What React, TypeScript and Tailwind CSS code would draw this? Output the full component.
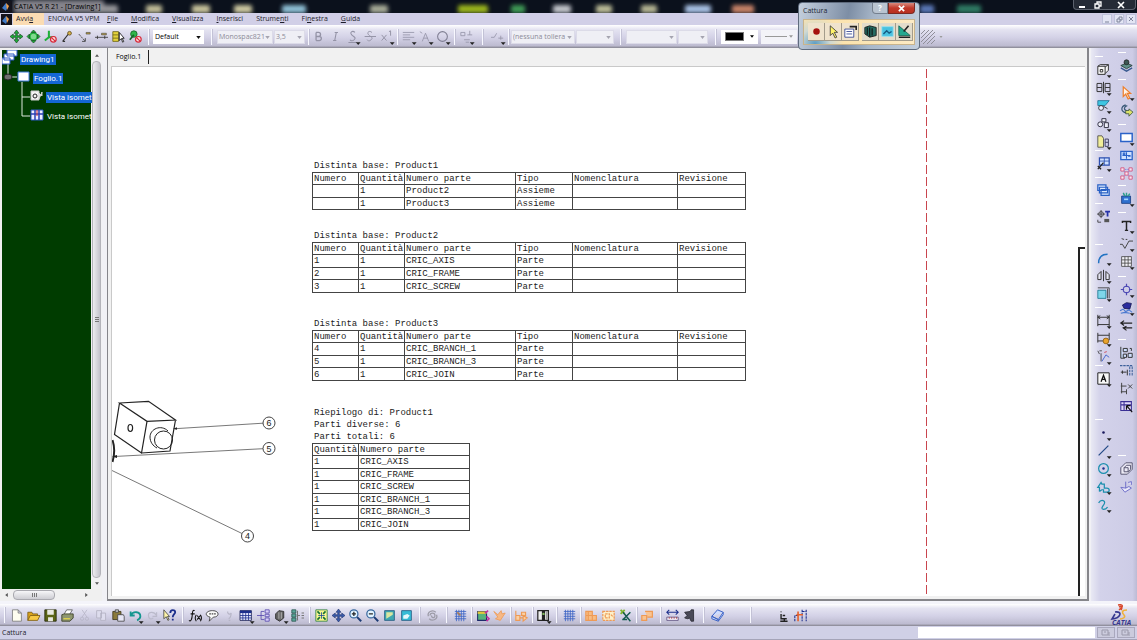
import type { ReactNode } from "react";
import clsx from "clsx";

type ToolItem = {
  label: string;
  icon: ReactNode;
  drop?: boolean;
};

type ToolGroup = {
  gap: string;
  tools: ToolItem[];
};

const FONT = "font-['Open_Sans','Noto_Sans',sans-serif]";
const BAR =
  "bg-[linear-gradient(to_bottom,#ffffff_0%,#e4e3f1_20%,#d3d1e6_55%,#bdbbd0_90%,#85848f_100%)]";

/* ---------- toolbar data ---------- */

const green = "#1fae3a";
const navy = "#1c2f8c";
const blue = "#3b62c4";
const orange = "#ee9a55";
const teal = "#1b8fae";
const dim = "#9493a6";

const moveArrows = (
  <path d="M8 0l3 4H9v3h3V5l4 3-4 3V9H9v3h2l-3 4-3-4h2V9H4v2L0 8l4-3v2h3V4H5z" fill={green} stroke="#17421f" strokeWidth=".8" />
);

const ban = (
  <g stroke="#d8293a" strokeWidth="1.5">
    <circle cx="11.5" cy="11.5" r="3.5" fill="#fbd9d9" />
    <path d="M9 9l5 5" />
  </g>
);

const gridIcon = (
  <path d="M1 3h14M1 6h14M1 9h14M1 12h14M3 1v14M6 1v14M9 1v14M12 1v14" stroke={blue} />
);

const viewTools: ToolItem[] = [
  { label: "Sposta", icon: moveArrows },
  {
    label: "Ruota",
    icon: (
      <>
        <circle cx="8" cy="8" r="4.5" fill="#7fd98d" stroke={green} strokeWidth="2" />
        <path d="M8 0l3 3H5zM8 16l3-3H5zM0 8l3-3v6zM16 8l-3-3v6z" fill={green} stroke="#17421f" strokeWidth=".8" />
      </>
    ),
  },
  {
    label: "Blocca assi",
    icon: (
      <>
        <path d="M6 1v8M6 9h7M6 9l-5 4" stroke={green} strokeWidth="2.5" />
        {ban}
      </>
    ),
  },
  {
    label: "Bacchetta",
    icon: (
      <>
        <path d="M2 14l7-9M2 14h3" stroke="#333" strokeWidth="1.3" />
        <circle cx="10.5" cy="4" r="2.3" fill="#d6b14c" stroke="#5e4a1a" />
      </>
    ),
  },
  {
    label: "Linea guida",
    icon: (
      <>
        <path d="M1 5l8 9" stroke="#333" strokeDasharray="3 1" />
        <path d="M10 3h5v2h-5z" fill="#b89c3f" stroke="#444" strokeWidth=".7" />
        <path d="M9 14v-4M9 14H5" stroke="#333" />
      </>
    ),
  },
  {
    label: "Allinea",
    icon: (
      <>
        <path d="M0 9h16M3 7v4M12 7v4" stroke="#333" />
        <path d="M8 4h6v2H8z" fill="#b89c3f" stroke="#444" strokeWidth=".7" />
      </>
    ),
  },
  {
    label: "Catalogo",
    icon: (
      <>
        <path d="M1 2h7v12H1zM1 6h7M1 10h7" fill="#e4d23c" stroke="#6b6216" />
        <path d="M9 3v10l2.500-2.500L13 15l1.500-.8-2-4H15z" fill="#fff" stroke="#111" />
      </>
    ),
  },
  {
    label: "Disattiva vincoli",
    icon: (
      <>
        <circle cx="6" cy="5" r="4" fill="#2fb84b" stroke="#18622a" />
        <path d="M1 12l5-6" stroke="#18622a" strokeWidth="2" />
        {ban}
      </>
    ),
  },
];

const textTools: ToolItem[] = [
  { label: "Grassetto", icon: <path d="M5 3v10M5 3h3a2.500 2.500 0 010 5H5h4a2.500 2.500 0 010 5H5" stroke={dim} strokeWidth="1.6" /> },
  { label: "Corsivo", icon: <path d="M7 3h4M5 13h4M9 3L7 13" stroke={dim} strokeWidth="1.3" /> },
  { label: "Sottolineato", drop: true, icon: <path d="M11 3C8 0 4 3 7 6s6 3 3 6-5 0-5 0M3 15.500h10" stroke={dim} strokeWidth="1.3" /> },
  { label: "Barrato", icon: <path d="M11 3C8 0 4 3 7 6s6 3 3 6-5 0-5 0M2 8h14" stroke={dim} strokeWidth="1.200" /> },
  { label: "Apice", drop: true, icon: <path d="M2 6l6 7M8 6l-6 7M11 2l2-1v6" stroke={dim} strokeWidth="1.200" /> },
];

const paraTools: ToolItem[] = [
  { label: "Allineamento", drop: true, icon: <path d="M1 3h14M1 6h9M1 9h14M1 12h9" stroke={dim} /> },
  { label: "Ancoraggio", drop: true, icon: <path d="M4 14l4-10 4 10M6 10h5M1 2l3 2" stroke={dim} /> },
  { label: "Cornice", drop: true, icon: <circle cx="8" cy="8" r="6" stroke="#7f7e92" strokeWidth="1.300" /> },
];

const symbolTool: ToolItem[] = [
  { label: "Simboli", drop: true, icon: <path d="M1 3h5v4H1zM9 6h6M12 1v5M5 12h7M7 15h4" stroke={dim} /> },
];

const dimTool: ToolItem[] = [
  { label: "Posizione", drop: true, icon: <path d="M0 9h4l3-5M9 10h6M12 7v5" stroke={dim} /> },
];

const bottomGroups: ToolGroup[] = [
  {
    gap: "w-2",
    tools: [
      { label: "Nuovo", icon: <path d="M3 1h7l4 4v10H3zM10 1v4h4" fill="#fffef0" stroke="#777" /> },
      {
        label: "Apri",
        icon: (
          <>
            <path d="M1 14V4h5l1 2h6v3" fill="#d9a21b" stroke="#7a5a10" />
            <path d="M1 14l3-6h12l-3 6z" fill="#f6c845" stroke="#7a5a10" />
          </>
        ),
      },
      {
        label: "Salva",
        icon: (
          <>
            <path d="M1 1h14v14H1z" fill="#5b6416" stroke="#22260a" />
            <path d="M4 1h8v6H4zM5 10h6v5H5z" fill="#e8e8e0" />
          </>
        ),
      },
      {
        label: "Stampa",
        icon: (
          <>
            <path d="M4 6l3-5h7l-3 5" fill="#fff" stroke="#555" />
            <path d="M1 7l3-1h11v5l-4 4H1z" fill="#8e9670" stroke="#34371f" />
            <path d="M3 12h8" stroke="#e8d94a" strokeWidth="1.500" />
          </>
        ),
      },
      { label: "Taglia", icon: <path d="M5 1l6 9M11 1L5 10M3 12a2 2 0 104 0 2 2 0 10-4 0M9 12a2 2 0 104 0 2 2 0 10-4 0" stroke="#b6b5c6" /> },
      { label: "Copia", icon: <path d="M2 2h6v9H2zM7 5h6v9H7z" fill="#dddced" stroke="#b1b0c2" /> },
      {
        label: "Incolla",
        icon: (
          <>
            <path d="M1 3h10v10H1z" fill="#8b7a3a" stroke="#3b3418" />
            <path d="M4 1h4v3H4z" fill="#ccc" stroke="#444" />
            <path d="M7 7h7l1 2v6H7z" fill="#e6e6f5" stroke="#444" />
          </>
        ),
      },
      { label: "Annulla", drop: true, icon: <path d="M2 3v5h5M2 8c3-6 12-5 12 1 0 3-2 4-4 5" stroke="#14968f" strokeWidth="2.200" /> },
      { label: "Ripeti", drop: true, icon: <path d="M13 4v5H8M13 8C10 3 3 3 3 8s4 5 6 3" stroke="#bbbacb" strokeWidth="1.500" /> },
      {
        label: "Guida rapida",
        icon: (
          <>
            <path d="M1 1v11l3-2.500L6 14l1.500-.8-2-4H8z" fill="#fff5a8" stroke="#444" />
            <path d="M9 5c0-5 6-4 6-1 0 2-3 3-3 6M12 12v2" stroke={navy} strokeWidth="2.200" />
          </>
        ),
      },
    ],
  },
  {
    gap: "w-[9px]",
    tools: [
      { label: "Formula", icon: <path d="M7 2C3 0 5 8 3 13c-1 2-2 2-3 1M2 6h5M9 7c-2 3-2 5 0 8M14 7c2 3 2 5 0 8M10 8l4 5M14 8l-4 5" stroke="#111" strokeWidth="1.300" /> },
      {
        label: "Commento",
        icon: (
          <>
            <path d="M8 2c9 0 9 8 1 8l-5 5 1-5C-3 8 0 2 8 2z" fill="#fafafa" stroke="#333" />
            <path d="M4 6h8" stroke="#444" strokeWidth="1.500" strokeDasharray="2 1" />
          </>
        ),
      },
      { label: "Nota", icon: <path d="M6 3a2 2 0 104 2c0 4-1 6-3 7M7 14h2" stroke="#b6b5c6" strokeWidth="1.400" /> },
      {
        label: "Tabella di progetto",
        drop: true,
        icon: (
          <>
            <path d="M0 2h14v12H0z" fill="#e8eaff" stroke="#1a1f4e" />
            <path d="M0 2h14v3H0z" fill={navy} />
            <path d="M0 8h14M0 11h14M3.500 5v9M7 5v9M10.500 5v9" stroke={navy} />
          </>
        ),
      },
      {
        label: "Struttura",
        icon: <path d="M0 8h5M5 3v10M5 3h4M5 8h4M5 13h4M10 1h5v4h-5zM10 6.500h5v3h-5zM10 11h5v4h-5z" fill="#d9cff8" stroke="#5547ad" />,
      },
      {
        label: "Blocco",
        drop: true,
        icon: (
          <>
            <path d="M2 6l4-4 6 1v8l-5 4-5-3z" fill="#666" stroke="#222" />
            <path d="M6 4v8M9 4v8" stroke="#bbb" />
          </>
        ),
      },
      {
        label: "Equivalenze",
        icon: (
          <>
            <path d="M1 1h5v4H1zM1 6h5v4H1zM1 11h5v4H1z" fill="#5aa79a" stroke="#2c5650" />
            <path d="M8 2v12M8 8h3M13 5h3M13 8h3M13 11h3" stroke="#777" strokeWidth="1.300" />
          </>
        ),
      },
    ],
  },
  {
    gap: "w-[7px]",
    tools: [
      {
        label: "Adatta tutto",
        icon: (
          <>
            <path d="M1 1h14v14H1z" fill="#f8f690" stroke="#2c7f43" />
            <path d="M3 3l3 3M13 3l-3 3M3 13l3-3M13 13l-3-3" stroke="#147034" strokeWidth="2" />
            <path d="M8 4v8M4 8h8" stroke="#1a4a9a" />
          </>
        ),
      },
      { label: "Panoramica", icon: <path d="M8 0l3 4H9v3h3V5l4 3-4 3V9H9v3h2l-3 4-3-4h2V9H4v2L0 8l4-3v2h3V4H5z" fill="#3a5cab" stroke="#1a2d66" strokeWidth=".7" /> },
      {
        label: "Zoom avanti",
        icon: (
          <>
            <circle cx="6" cy="6" r="5" fill="#e2f3ff" stroke="#35659c" strokeWidth="1.500" />
            <path d="M6 3.500v5M3.500 6h5" stroke="#222" strokeWidth="1.500" />
            <path d="M10 10l5 5" stroke="#1d3c75" strokeWidth="2.500" />
          </>
        ),
      },
      {
        label: "Zoom indietro",
        icon: (
          <>
            <circle cx="6" cy="6" r="5" fill="#e2f3ff" stroke="#35659c" strokeWidth="1.500" />
            <path d="M3.500 6h5" stroke="#222" strokeWidth="1.500" />
            <path d="M10 10l5 5" stroke="#1d3c75" strokeWidth="2.500" />
          </>
        ),
      },
      {
        label: "Vista normale",
        icon: (
          <>
            <path d="M2 2h12v12H2z" fill="#3ea7b0" stroke="#245a80" />
            <path d="M4 4h8v3l-8 5z" fill="#d8e6a1" />
          </>
        ),
      },
      {
        label: "Vista rapida",
        icon: (
          <>
            <path d="M2 2h12v12H2z" fill="#37bcd6" stroke="#245a80" />
            <path d="M4 8l5-2 3 2-3 4H4z" fill="#e6f7fb" />
          </>
        ),
      },
    ],
  },
  {
    gap: "w-[9px]",
    tools: [
      { label: "Aggiorna", icon: <path d="M12 4C8 0 1 4 3 9M4 12c4 4 11 0 9-5M5 8c0-4 6-4 6 0s-5 3-4 0" stroke="#9d9ca8" strokeWidth="1.600" /> },
    ],
  },
  {
    gap: "w-[11px]",
    tools: [
      {
        label: "Griglia di snap",
        icon: (
          <>
            {gridIcon}
            <path d="M4 4l4 4" stroke="#b07c4e" strokeWidth="2" />
          </>
        ),
      },
    ],
  },
  {
    gap: "w-[5px]",
    tools: [
      {
        label: "Proprietà colore",
        icon: (
          <>
            <path d="M2 3h11v11H2z" fill="#57b37b" stroke="#1d2a6b" strokeWidth="1.300" />
            <path d="M2 3h11v3H2z" fill="#e2c93a" />
            <path d="M11 5l4-3M13 9l3 3-3 3" stroke="#c432a0" strokeWidth="2" />
          </>
        ),
      },
      { label: "Evidenzia", icon: <path d="M1 3l5 4 4-5 1 4 4-1-6 9-6-2 3-2z" fill="#f6b885" stroke={orange} /> },
    ],
  },
  {
    gap: "w-[5px]",
    tools: [
      {
        label: "Genera quote",
        icon: <path d="M1 2v12h5V8H1M6 11h4M8 4h5v4H8zM10 8l5 3-5 4z" fill="#fbd0a4" stroke={orange} strokeWidth="1.400" />,
      },
    ],
  },
  {
    gap: "w-[5px]",
    tools: [
      {
        label: "Filtro",
        drop: true,
        icon: (
          <>
            <path d="M1 2h13v12H1z" fill="#eee" stroke="#222" strokeWidth="1.500" />
            <path d="M6 2h4v12H6z" fill="#222" />
            <circle cx="8" cy="6" r="1.500" fill="#7fb85a" />
            <path d="M12 3v10" stroke="#666" />
          </>
        ),
      },
    ],
  },
  { gap: "w-[9px]", tools: [{ label: "Griglia", icon: gridIcon }] },
  {
    gap: "w-[5px]",
    tools: [
      { label: "Punto di costruzione", icon: <path d="M1 3h8v11H1zM1 8h13v6H9M4 3v11" fill="#f8bd85" stroke={orange} strokeWidth="1.400" /> },
      { label: "Vincoli geometrici", icon: <path d="M1 3h14v11H1zM4 6h5v5H4zM11 7l3 3" fill="#fdf0c9" stroke={orange} strokeWidth="1.500" strokeDasharray="3 1" /> },
      {
        label: "Vincoli dimensionali",
        icon: (
          <>
            <path d="M2 1l5 5M7 1L2 6" stroke="#7fb52a" strokeWidth="2.200" />
            <path d="M5 13l9-9M5 4l9 11M4 13h6" stroke="#155a4f" strokeWidth="1.800" />
          </>
        ),
      },
    ],
  },
  {
    gap: "w-[5px]",
    tools: [
      { label: "Blocca", icon: <path d="M1 8h6v6H1zM5 3h9v7H8" fill="#f9c492" stroke={orange} strokeWidth="1.500" /> },
    ],
  },
  {
    gap: "w-2",
    tools: [
      {
        label: "Misura",
        icon: (
          <>
            <path d="M1 4h14M4 1L1 4l3 3M12 1l3 3-3 3" stroke={navy} strokeWidth="1.300" />
            <path d="M1 10h14v4H1z" fill="#f4f0fa" stroke="#5c4d7e" />
            <path d="M4 10v2M7 10v2M10 10v2M13 10v2" stroke="#a33" />
          </>
        ),
      },
      { label: "Misura elemento", icon: <path d="M2 4l7-1 1-2h3v14h-3l-2-4-2 1-4-1 3-3z" fill="#4a4a58" stroke="#2a2a33" /> },
    ],
  },
  {
    gap: "w-[11px]",
    tools: [
      {
        label: "Catalogo",
        icon: <path d="M1 9l7-8 7 3-6 9zM1 9v3l8 3 6-8V4M1 9l8 4v2" fill="#cddcff" stroke={blue} strokeWidth="1.200" />,
      },
    ],
  },
  {
    gap: "w-[49px]",
    tools: [
      { label: "Sedile", icon: <path d="M5 3v1M5 6v6h7M7 8h3M4 15h9M9 12v3" stroke="#222" strokeWidth="1.700" /> },
      {
        label: "Pianifica",
        icon: (
          <>
            <path d="M1 15V8h4M10 1v14M15 1v14M10 3h5" stroke={navy} strokeWidth="1.300" strokeDasharray="3 1" />
            <path d="M5 3v12M3 7h8" stroke="#e5622c" strokeWidth="2" />
          </>
        ),
      },
    ],
  },
];

const innerColumn: ToolGroup[] = [
  {
    gap: "mt-2",
    tools: [
      { label: "Vista frontale", drop: true, icon: <path d="M1 4h9v10H1zM10 5l4-3v7l-4 4M1 4l3-2h10M4 8h3v3H4z" fill="#f5f5f5" stroke="#333" strokeWidth="1.200" /> },
      { label: "Vista di sezione", drop: true, icon: <path d="M0 3h6v10H0zM10 3h6v10h-6zM8 1v14M0 8h6M10 8h6" stroke="#333" strokeWidth="1.200" /> },
      {
        label: "Vista di dettaglio",
        drop: true,
        icon: (
          <>
            <path d="M1 2h14l-5 6H1z" fill="#3fc6e2" stroke="#1b6f93" />
            <circle cx="5" cy="11" r="3" fill="#eef" stroke="#222" />
            <path d="M8 9l5 3" stroke="#222" />
          </>
        ),
      },
      { label: "Vista parziale", drop: true, icon: <path d="M1 9a3 3 0 106 0 3 3 0 10-6 0M6 2h5v4H6zM9 7h5v6H9z" fill="#ededf8" stroke="#334" strokeWidth="1.200" /> },
      {
        label: "Vista interrotta",
        drop: true,
        icon: (
          <>
            <path d="M1 1h5l2 3v11H1z" fill="#f2ee9a" stroke="#444" />
            <path d="M10 5h4v9h-4zM10 9h4" stroke="#446" strokeWidth="1.200" />
          </>
        ),
      },
    ],
  },
  {
    gap: "mt-0",
    tools: [
      {
        label: "Procedura viste",
        drop: true,
        icon: (
          <>
            <path d="M3 1h12v9H3z" fill="#cfe0ff" stroke="#2b4fb0" strokeWidth="1.500" />
            <path d="M9 1v9M3 5h12" stroke="#2b4fb0" />
            <path d="M1 15l7-8M1 11l4 4" stroke="#222" strokeWidth="1.600" />
          </>
        ),
      },
    ],
  },
  {
    gap: "mt-[5px]",
    tools: [{ label: "Nuovo foglio", icon: <path d="M1 1h10v7H1zM3 4h10v7H3zM5 7h10v7H5z" fill="#dceaff" stroke="#2860c4" strokeWidth="1.500" /> }],
  },
  {
    gap: "mt-1",
    tools: [
      {
        label: "Nuova vista",
        icon: (
          <>
            <circle cx="5" cy="5" r="3" stroke="#333" />
            <path d="M5 0v10M0 5h10M1 12v3h4" stroke="#333" />
            <path d="M10 2h6M13 2v6" stroke="#2733a8" strokeWidth="2.200" />
            <path d="M9 11h6v4H9z" fill="#555" />
          </>
        ),
      },
    ],
  },
  {
    gap: "mt-[19px]",
    tools: [
      { label: "Raccordo", drop: true, icon: <path d="M2 15C2 8 6 4 13 4" stroke="#2173c2" strokeWidth="1.800" /> },
      { label: "Simmetria", drop: true, icon: <path d="M5 3L1 7v6h4zM11 3l4 4v6h-4zM8 1v14" fill="#e5e5f2" stroke="#333" strokeWidth="1.200" /> },
      {
        label: "Trasformazione",
        drop: true,
        icon: (
          <>
            <path d="M1 4h10v10H1z" fill="#7ed6ea" stroke="#16758e" />
            <path d="M1 1h14v13M13 2v12" stroke="#333" />
          </>
        ),
      },
    ],
  },
  {
    gap: "mt-[5px]",
    tools: [
      { label: "Quota", drop: true, icon: <path d="M1 1v14M15 1v14M1 4h14M4 2L1 4l3 2M12 2l3 2-3 2M1 13h14" stroke="#333" strokeWidth="1.200" /> },
      {
        label: "Quota tolleranza",
        drop: true,
        icon: (
          <>
            <path d="M1 1v12M15 1v9M1 4h14M1 11h8" stroke="#333" strokeWidth="1.200" />
            <circle cx="11" cy="11" r="3.500" fill="#e9a32c" stroke="#8a5a10" />
          </>
        ),
      },
      {
        label: "Quota cumulata",
        drop: true,
        icon: (
          <>
            <path d="M1 1l2 4M5 4v10M3 1h3" stroke="#333" />
            <path d="M6 14l5-8 4 3" stroke="#4a6bd0" strokeWidth="1.200" />
            <path d="M9 3l3-1" stroke="#c34" />
          </>
        ),
      },
    ],
  },
  {
    gap: "mt-0",
    tools: [
      {
        label: "Riferimento",
        drop: true,
        icon: (
          <>
            <path d="M1 1h14v14H1z" fill="#f7f7f7" stroke="#222" strokeWidth="1.200" />
            <path d="M5 12l3-8 3 8M6 9h4" stroke="#111" strokeWidth="1.600" />
          </>
        ),
      },
    ],
  },
  {
    gap: "mt-8",
    tools: [
      { label: "Punto", drop: true, icon: <circle cx="8" cy="8" r="1.600" fill="#1a1a5e" /> },
      { label: "Linea", drop: true, icon: <path d="M2 14L14 2" stroke="#234a86" strokeWidth="1.500" /> },
      {
        label: "Cerchio",
        drop: true,
        icon: (
          <>
            <circle cx="8" cy="8" r="6" stroke={teal} strokeWidth="1.500" />
            <circle cx="8" cy="8" r="1.500" fill={navy} />
          </>
        ),
      },
      { label: "Profilo", drop: true, icon: <path d="M3 14V9H1l4-6 1 2h3v5h3c4 0 4 5 0 5H8v-3H6l-3 2" stroke={teal} strokeWidth="1.500" /> },
      { label: "Spline", drop: true, icon: <path d="M2 6c3-5 9-3 7 1s-5 6-1 7c3 0 4-1 5-3" stroke={teal} strokeWidth="1.500" /> },
    ],
  },
];

const outerColumn: ToolGroup[] = [
  {
    gap: "mt-1",
    tools: [
      {
        label: "Ambiente",
        icon: (
          <>
            <path d="M1 8l7-3 7 3-7 4z" fill="#5f8f87" stroke="#1d3531" />
            <path d="M1 11l7 4 7-4" stroke="#3a5a90" strokeWidth="1.600" />
            <circle cx="8" cy="4" r="3" fill="#3c5955" stroke="#222" />
          </>
        ),
      },
    ],
  },
  {
    gap: "mt-[5px]",
    tools: [
      { label: "Seleziona", drop: true, icon: <path d="M4 1v12l3-3 3 6 2-1-3-6h4z" fill="#fff3e6" stroke="#ee7f2c" strokeWidth="1.500" /> },
      {
        label: "Orbita",
        icon: (
          <>
            <path d="M7 1C1 3 0 9 8 11M9 2C5 3 4 7 8 8" stroke="#3a5a78" strokeWidth="1.500" />
            <path d="M7 8h4V6l5 4-5 5v-3H7z" fill="#dbe36a" stroke="#3d5340" />
          </>
        ),
      },
    ],
  },
  {
    gap: "mt-[5px]",
    tools: [
      { label: "Foglio", drop: true, icon: <path d="M1 3h14v10H1z" fill="#fff" stroke="#2a62c8" strokeWidth="1.800" /> },
      {
        label: "Layout viste",
        icon: (
          <>
            <path d="M1 3h14v10H1z" fill="#cfe1ff" stroke="#2a62c8" strokeWidth="1.600" />
            <path d="M8 4v8M3 8h10M4 5h2v2H4zM10 9h3" stroke="#2a62c8" strokeWidth="1.300" />
          </>
        ),
      },
      {
        label: "Nodi",
        icon: (
          <>
            <path d="M3 3l10 10M13 3L3 13M3 3h10" stroke="#7483e0" strokeDasharray="2 1" />
            <path d="M1 1h4v4H1zM11 1h4v4h-4zM1 11h4v4H1zM11 11h4v4h-4zM6 6h4v4H6z" fill="#fbe3ee" stroke="#cf4a78" />
          </>
        ),
      },
    ],
  },
  {
    gap: "mt-[3px]",
    tools: [
      {
        label: "Distinta",
        drop: true,
        icon: (
          <>
            <path d="M2 5h11v9H2z" fill="#2e6fce" stroke="#173b80" />
            <path d="M4 1l2 4M8 1v4M12 2l-2 3" stroke="#2c9d8d" strokeWidth="1.800" />
            <path d="M5 9h5" stroke="#9fd4ff" strokeWidth="2" />
          </>
        ),
      },
    ],
  },
  {
    gap: "mt-[5px]",
    tools: [
      { label: "Testo", drop: true, icon: <path d="M3 5V3h10v2M8 3v11M6 14h4" stroke="#222" strokeWidth="1.800" /> },
      { label: "Rugosità", drop: true, icon: <path d="M0 9h3l3 5 5-9h5M2 2l3 1M7 3h2" stroke="#444" strokeWidth="1.200" /> },
      { label: "Tabella", drop: true, icon: <path d="M2 2h12v12H2zM6 2v12M10 2v12M2 6h12M2 10h12" fill="#f2f2f8" stroke="#444" /> },
    ],
  },
  {
    gap: "mt-[6px]",
    tools: [
      {
        label: "Assi",
        drop: true,
        icon: (
          <>
            <circle cx="8" cy="8" r="4" stroke="#4b48b4" strokeWidth="1.300" />
            <path d="M8 1v4M8 11v4M1 8h4M11 8h4" stroke="#4b48b4" strokeWidth="1.500" />
          </>
        ),
      },
      {
        label: "Riempimento",
        drop: true,
        icon: (
          <>
            <path d="M3 5l5-3 6 1-2 7-7-1z" fill="#2a2c9e" stroke="#15164f" />
            <path d="M0 12l4-2 3 3 4-2 4 3M1 15l5-1 6 1" stroke="#4a7ad0" strokeWidth="1.300" />
          </>
        ),
      },
      { label: "Freccia", icon: <path d="M1 5h14M5 2L1 5l4 3M4 11h11M8 9l-4 2 4 3" stroke="#222" strokeWidth="1.500" /> },
    ],
  },
  {
    gap: "mt-[5px]",
    tools: [
      { label: "Genera numeri", icon: <path d="M1 1v14h5M4 3h5v4H4zM10 9h5v5h-5zM4 10h4v4H4zM12 3h2v3" fill="#cfe0ff" stroke="#333" strokeWidth="1.200" /> },
      {
        label: "Quote passo passo",
        icon: (
          <>
            <path d="M0 2h16M12 3v12M15 3v12" stroke="#3d5f9a" strokeWidth="1.300" strokeDasharray="3 1" />
            <path d="M1 10h7M3 8v4M9 7v7" stroke="#333" strokeWidth="1.200" />
          </>
        ),
      },
      { label: "Quote cumulate", icon: <path d="M2 1v13M1 5h7M8 9v6M1 12h7M10 3l5 5M15 3l-5 5" stroke="#444" strokeWidth="1.200" /> },
      {
        label: "Analisi",
        icon: (
          <>
            <path d="M1 2h13v11H1zM1 6h13M5 2v11" fill="#e0d9fa" stroke="#3a2f94" strokeWidth="1.300" />
            <path d="M8 7l7 8M8 7v5M8 7h5" stroke="#111" strokeWidth="1.500" />
          </>
        ),
      },
    ],
  },
  {
    gap: "mt-10",
    tools: [
      { label: "Solido", icon: <path d="M1 7l6-6h8v8l-6 6H1zM5 7h5v5H5zM5 7l3-3h5v5l-3 3" fill="#eceaf6" stroke="#4b4a66" strokeWidth="1.100" /> },
      { label: "Sistema di assi", icon: <path d="M7 2v8M7 10l-6-1 5 6 8-5-3-2zM10 3l4-1v4" fill="#e9e8fa" stroke="#6f6fc9" strokeWidth="1.200" /> },
    ],
  },
];

const captureTools: ToolItem[] = [
  { label: "Registra", icon: <circle cx="8" cy="8" r="4" fill="#a5110f" /> },
  { label: "Selezione", icon: <path d="M4 1v12l3-3 3 6 2-1-3-6h4z" fill="#fff36b" stroke="#333" /> },
  {
    label: "Opzioni",
    icon: (
      <>
        <path d="M1 5h11v10H1z" fill="#fff" stroke="#283b8c" />
        <path d="M3 8h7M3 11h7" stroke="#283b8c" />
        <path d="M7 2h8v4" stroke="#222" strokeWidth="2" />
      </>
    ),
  },
  {
    label: "Album",
    icon: (
      <>
        <path d="M1 3l6-2 8 2v10l-8 2-6-4z" fill="#246c63" stroke="#111" />
        <path d="M4 3v9M7 3v11M10 4v9" stroke="#111" strokeWidth="1.300" />
      </>
    ),
  },
  {
    label: "Modo pixel",
    icon: (
      <>
        <path d="M1 2h14v12H1z" fill="#49c2e0" stroke="#9be0ee" />
        <path d="M3 11l4-4 3 3 3-2" stroke="#145a80" strokeWidth="1.600" />
      </>
    ),
  },
  {
    label: "Modo vettoriale",
    icon: (
      <>
        <path d="M1 1v12h14z" fill="#25a88f" stroke="#136353" />
        <path d="M7 8l6-7M1 15h14" stroke="#222" strokeWidth="2" />
      </>
    ),
  },
];

/* ---------- BOM data ---------- */

const bomTables = [
  {
    title: "Distinta base: Product1",
    size: "h-[38px]",
    gap: "mt-0",
    rows: [
      ["", "1", "Product2", "Assieme", "", ""],
      ["", "1", "Product3", "Assieme", "", ""],
    ],
  },
  {
    title: "Distinta base: Product2",
    size: "h-[51px]",
    gap: "mt-5",
    rows: [
      ["1", "1", "CRIC_AXIS", "Parte", "", ""],
      ["2", "1", "CRIC_FRAME", "Parte", "", ""],
      ["3", "1", "CRIC_SCREW", "Parte", "", ""],
    ],
  },
  {
    title: "Distinta base: Product3",
    size: "h-[51px]",
    gap: "mt-[25px]",
    rows: [
      ["4", "1", "CRIC_BRANCH_1", "Parte", "", ""],
      ["5", "1", "CRIC_BRANCH_3", "Parte", "", ""],
      ["6", "1", "CRIC_JOIN", "Parte", "", ""],
    ],
  },
];

const bomHead = ["Numero", "Quantità", "Numero parte", "Tipo", "Nomenclatura", "Revisione"];
const bomCols = ["w-[46px]", "w-[46px]", "w-[111px]", "w-[57px]", "w-[105px]", "w-[68px]"];

const recapRows = ["CRIC_AXIS", "CRIC_FRAME", "CRIC_SCREW", "CRIC_BRANCH_1", "CRIC_BRANCH_3", "CRIC_JOIN"].map(
  (part) => ["1", part]
);

const balloons = [
  { n: "6", x: 269, y: 423 },
  { n: "5", x: 269, y: 448.5 },
  { n: "4", x: 247.5, y: 536 },
];

/* ---------- small parts ---------- */

function Tool({ item, size = "w-[17px] h-[18px]" }: { item: ToolItem; size?: string }) {
  return (
    <button type="button" aria-label={item.label} className={clsx("flex shrink-0 items-center justify-center", size)}>
      <svg viewBox="0 0 16 16" className="size-[13px] overflow-visible" fill="none">
        {item.icon}
        {item.drop && <path d="M12 15h6l-3 3.500z" fill="#222" />}
      </svg>
    </button>
  );
}

function Divider({ className }: { className: string }) {
  return (
    <span className={clsx("flex shrink-0 justify-center", className)}>
      <span className="h-4 w-px bg-[#f8f8ff] shadow-[1px_0_0_#c3c2d6]" />
    </span>
  );
}

function Combo({ label, value, width, off }: { label: string; value: string; width: string; off?: boolean }) {
  return (
    <span className={clsx("relative mr-px flex h-[14px] shrink-0", width)}>
      <select
        aria-label={label}
        defaultValue={value}
        className={clsx(
          "w-full appearance-none overflow-hidden border pr-2 pl-px text-[7px] leading-[10px]",
          off ? "border-[#dcdbe8] bg-[#efeff5] text-[#8c8b98]" : "border-white bg-white text-black"
        )}
      >
        <option>{value}</option>
      </select>
      <svg viewBox="0 0 6 4" className="pointer-events-none absolute top-[6px] right-[3px] h-[3px] w-[5px]">
        <path d="M0 0h6L3 4z" fill={off ? "#a5a4b0" : "#111"} />
      </svg>
    </span>
  );
}

function ToolColumn({ groups }: { groups: ToolGroup[] }) {
  return (
    <div className="flex w-[23px] flex-col items-start">
      {groups.map((group, i) => (
        <div key={i} className={group.gap}>
          <div className="h-1 pl-1">
            <div className="h-px w-2 bg-white" />
          </div>
          {group.tools.map((item) => (
            <Tool key={item.label} item={item} size="h-[18px] w-6" />
          ))}
        </div>
      ))}
    </div>
  );
}

function BomTable({ label, head, rows, cols, className }: { label: string; head: string[]; rows: string[][]; cols: string[]; className: string }) {
  return (
    <table aria-label={label} className={clsx("table-fixed border-collapse border border-[#444] leading-[10px]", className)}>
      <thead>
        <tr>
          {head.map((h, i) => (
            <th key={h} className={clsx("border border-[#444] p-0 pt-px pl-px text-left font-normal whitespace-nowrap", cols[i])}>
              {h}
            </th>
          ))}
        </tr>
      </thead>
      <tbody>
        {rows.map((row, r) => (
          <tr key={r}>
            {row.map((cell, c) => (
              <td key={c} className="border border-[#444] p-0 pt-px pl-px whitespace-nowrap">
                {cell}
              </td>
            ))}
          </tr>
        ))}
      </tbody>
    </table>
  );
}

function AppGlyph() {
  return (
    <svg viewBox="0 0 11 11" className="size-[11px] shrink-0">
      <path d="M0 0h11v11H0z" fill="#14131c" />
      <path d="M1 7l4-5 2 3-2 5z" fill="#3f7bc8" />
      <path d="M5 2l3 3-2 4z" fill="#f2a14a" />
    </svg>
  );
}

/* ---------- page sections ---------- */

const blobs = [
  [14, 90, "#85848c"],
  [98, 20, "#96969a"],
  [146, 16, "#c2bd98"],
  [192, 18, "#c9c49c"],
  [234, 18, "#cfcaa2"],
  [282, 24, "#8fc0d6"],
  [370, 18, "#a8ac98"],
  [458, 30, "#9bb51c"],
  [511, 14, "#3f9a55"],
  [553, 18, "#c3c6cc"],
  [596, 16, "#bdbd98"],
  [641, 16, "#b5b593"],
  [685, 26, "#a9c2e6"],
  [732, 22, "#c98368"],
  [920, 14, "#5b78b8"],
  [957, 24, "#2f7a63"],
] as const;

function TitleBar() {
  return (
    <header className="relative flex h-[13px] items-center overflow-hidden bg-[#0b111c]">
      <svg className="absolute inset-0 h-full w-full blur-[2px]" aria-hidden="true">
        {blobs.map(([x, w, fill]) => (
          <rect key={x} x={x} y={x === 14 ? 0 : 5} width={w} height={x === 14 ? 14 : 10} rx="2" fill={fill} />
        ))}
      </svg>
      <div className="relative flex items-center gap-0.5 pl-px">
        <AppGlyph />
        <h1 className="text-[7px] leading-3 text-black">CATIA V5 R 21 - [Drawing1]</h1>
      </div>
      <div className="relative mr-px mb-[3px] ml-auto flex h-[10px] rounded-b-sm border border-t-0 border-[#5b616d] bg-[#252b36] text-white">
        <button type="button" aria-label="Riduci a icona" className="flex w-4 items-center justify-center">
          <svg viewBox="0 0 8 8" className="size-2"><path d="M1 5h6v2H1z" fill="#fff" /></svg>
        </button>
        <button type="button" aria-label="Ripristina" className="flex w-4 items-center justify-center">
          <svg viewBox="0 0 8 8" className="size-2"><path d="M1 3h4v4H1zM3 3V1h4v4H5" fill="none" stroke="#fff" strokeWidth="1.300" /></svg>
        </button>
        <button type="button" aria-label="Chiudi" className="flex w-[29px] items-center justify-center">
          <svg viewBox="0 0 8 8" className="size-2"><path d="M1 1l6 6M7 1L1 7" stroke="#fff" strokeWidth="1.600" /></svg>
        </button>
      </div>
    </header>
  );
}

function MenuBar() {
  return (
    <nav className="flex h-3 items-center bg-[#d1cfe7] text-[7px] leading-3 text-[#1d1d2b]">
      <span className="mr-px ml-px"><AppGlyph /></span>
      <button type="button" className="w-[31px] bg-[#fbdcb3] pl-[3px] text-left">Avvi<u>a</u></button>
      <div className="ml-1 flex gap-[13px]">
        <button type="button" className="w-[46px] whitespace-nowrap">ENOVIA V5 VPM</button>
        <button type="button"><u>F</u>ile</button>
        <button type="button"><u>M</u>odifica</button>
        <button type="button"><u>V</u>isualizza</button>
        <button type="button"><u>I</u>nserisci</button>
        <button type="button">Strume<u>n</u>ti</button>
        <button type="button">Fi<u>n</u>estra</button>
        <button type="button"><u>G</u>uida</button>
      </div>
      <div className="mr-px ml-auto flex gap-0.5">
        {[
          { label: "Riduci documento", d: "M2 7h4" },
          { label: "Ripristina documento", d: "M2 4h3v3H2zM4 4V2h3v3H5" },
          { label: "Chiudi documento", d: "M2 2l4 4M6 2L2 6" },
        ].map((b) => (
          <button key={b.label} type="button" aria-label={b.label} className="flex size-[10px] items-center justify-center border border-[#bfc3dc] bg-[#e3e5f4]">
            <svg viewBox="0 0 8 8" className="size-2"><path d={b.d} fill="none" stroke="#7d8299" /></svg>
          </button>
        ))}
      </div>
    </nav>
  );
}

function TopToolbar() {
  return (
    <div className={clsx("flex h-[23px] items-center pl-2", BAR)}>
      {viewTools.map((item) => <Tool key={item.label} item={item} />)}
      <Divider className="w-[9px]" />
      <Combo label="Stile" value="Default" width="w-[51px]" />
      <Divider className="w-3" />
      <Combo label="Carattere" value="Monospac821" width="w-[56px]" off />
      <Combo label="Dimensione" value="3,5" width="w-[31px]" off />
      <Divider className="w-1" />
      {textTools.map((item) => <Tool key={item.label} item={item} />)}
      <Divider className="w-[5px]" />
      {paraTools.map((item) => <Tool key={item.label} item={item} />)}
      <Divider className="w-[7px]" />
      {symbolTool.map((item) => <Tool key={item.label} item={item} />)}
      <Divider className="w-[14px]" />
      {dimTool.map((item) => <Tool key={item.label} item={item} />)}
      <Divider className="w-[5px]" />
      <Combo label="Tolleranza" value="(nessuna tollera" width="w-[64px]" off />
      <Combo label="Valore tolleranza" value="" width="w-[38px]" off />
      <Divider className="w-[11px]" />
      <Combo label="Formato numerico" value="" width="w-[51px]" off />
      <Combo label="Precisione" value="" width="w-[30px]" off />
      <Divider className="w-3" />
      <button type="button" aria-label="Colore" className="mr-[3px] flex h-[14px] w-[37px] shrink-0 items-center justify-between bg-white px-1">
        <span className="h-[9px] w-[19px] border border-[#777] bg-black" />
        <svg viewBox="0 0 6 4" className="h-[3px] w-1"><path d="M0 0h6L3 4z" /></svg>
      </button>
      <button type="button" aria-label="Tipo di linea" className="flex h-[14px] w-[36px] shrink-0 items-center justify-between bg-[#f3f3f8] px-1">
        <span className="h-px w-[22px] bg-[#999]" />
        <svg viewBox="0 0 6 4" className="h-[3px] w-1"><path d="M0 0h6L3 4z" fill="#999" /></svg>
      </button>
      <button type="button" aria-label="Tratteggio" className="ml-[124px] flex shrink-0 items-center gap-1">
        <svg viewBox="0 0 14 14" className="size-[14px]">
          <path d="M0 4l4-4M0 8l8-8M0 12l12-12M2 14L14 2M6 14l8-8M10 14l4-4" stroke="#8f8e98" />
        </svg>
        <svg viewBox="0 0 6 4" className="h-0.5 w-1"><path d="M0 0h6L3 4z" fill="#999" /></svg>
      </button>
    </div>
  );
}

function CapturePalette() {
  return (
    <section
      aria-label="Cattura"
      className="absolute top-[2px] left-[798px] flex w-[122px] flex-col rounded border border-[#5f6b7d] bg-[linear-gradient(100deg,#c5d0de_0%,#7d8ea5_40%,#a7b6c8_60%,#c3cfdd_100%)] px-1 pb-1"
    >
      <div className="flex h-4 items-start">
        <h2 className="pt-[3px] text-[7px] leading-[10px] text-[#1c2733]">Cattura</h2>
        <button type="button" aria-label="Guida" className="ml-auto h-[11px] w-4 rounded-bl-sm border border-t-0 border-[#75808f] bg-[#b9c4d1] text-[8px] leading-[10px] font-bold text-white">?</button>
        <button type="button" aria-label="Chiudi" className="flex h-[11px] w-[27px] items-center justify-center rounded-br-sm border border-t-0 border-[#7b2a22] bg-[linear-gradient(#d98b7e_0%,#c1392a_50%,#b8301f_100%)]">
          <svg viewBox="0 0 8 8" className="size-[7px]"><path d="M1 1l6 6M7 1L1 7" stroke="#fff" strokeWidth="2" /></svg>
        </button>
      </div>
      <div className="flex h-[26px] items-center border border-[#c9b48c] bg-[radial-gradient(circle_at_10%_100%,#5d9dc4_0%,#cfd9d3_15%,#fbe3ae_28%,#fdebc5_100%)] pl-1">
        {captureTools.map((item, i) => (
          <span key={item.label} className={clsx("flex border-r border-b border-[#a39c8c]", i < 3 ? "bg-[#efe3cd]" : "bg-[#e2dccb]", i === 3 && "ml-[3px]")}>
            <Tool item={item} size="h-[17px] w-[16px]" />
          </span>
        ))}
      </div>
    </section>
  );
}

function TreePanel() {
  return (
    <aside className="flex w-[102px] shrink-0 flex-col bg-[#f0f0f0] pt-0.5 pl-0.5">
      <div className="flex flex-1">
        <div className="relative flex w-[89px] flex-col bg-[#003c00] font-[Roboto,sans-serif] text-[8px] leading-[11px] text-white">
          <svg viewBox="0 0 89 80" className="absolute top-0 left-0 h-20 w-[89px]" fill="none" aria-hidden="true">
            <path d="M6 12v15M6 27h9M20 32v34M20 47h8M20 66h8" stroke="#dfe8df" />
            <path d="M5 0h10v6H5zM2 4h10v6H2zM0 8h8v6H0z" fill="#fff" stroke="#2a57c4" />
            <ellipse cx="6" cy="27" rx="4" ry="3" fill="#6d6d6d" stroke="#222" />
            <path d="M16 22h11v9H16z" fill="#fff" stroke="#3d79dd" />
            <path d="M29 41h8v9h-8zM37 43l3 3v-4l-3 7" fill="#f4f4f4" stroke="#ccc" />
            <circle cx="33" cy="46" r="2" stroke="#222" />
            <path d="M29 60h12v10H29z" fill="#eef" stroke="#2a57c4" />
            <path d="M33 60v10M37 60v10M29 64h12" stroke="#2a3fb4" strokeWidth="1.500" />
            <path d="M35 60v6" stroke="#c33" />
          </svg>
          <div className="relative flex h-[19px] items-center pl-[18px]"><a href="#drawing" className="bg-[#1467d3] px-px">Drawing1</a></div>
          <div className="relative flex h-[19px] items-center pl-[31px]"><a href="#sheet" className="bg-[#1467d3] px-px">Foglio.1</a></div>
          <div className="relative flex h-[19px] items-center pl-[44px]"><a href="#view1" className="flex-1 bg-[#1467d3] pl-px whitespace-nowrap">Vista isomet</a></div>
          <div className="relative flex h-[19px] items-center pl-[44px]"><a href="#view2" className="pl-px whitespace-nowrap">Vista isomet</a></div>
        </div>
        <div className="flex w-[11px] flex-col items-center justify-between bg-[#f1f1f3] py-1">
          <svg viewBox="0 0 6 4" className="h-[3px] w-1"><path d="M0 4h6L3 0z" fill="#555" /></svg>
          <div className="my-1 flex w-[9px] flex-1 flex-col items-center justify-center gap-px rounded-sm border border-[#b4b4ba] bg-[linear-gradient(to_right,#ededf0,#c3c3cb)]">
            <span className="h-px w-1 bg-[#777]" />
            <span className="h-px w-1 bg-[#777]" />
            <span className="h-px w-1 bg-[#777]" />
          </div>
          <svg viewBox="0 0 6 4" className="h-[3px] w-1"><path d="M0 0h6L3 4z" fill="#555" /></svg>
        </div>
      </div>
      <div className="mb-px flex h-[11px] w-[89px] items-center px-[3px]">
        <svg viewBox="0 0 4 6" className="h-1 w-[3px]"><path d="M4 0v6L0 3z" fill="#555" /></svg>
        <div className="ml-[5px] flex h-[10px] w-[42px] items-center justify-center gap-px rounded-sm border border-[#a9a9af] bg-[linear-gradient(#f6f6f8,#cdcdd3)]">
          <span className="h-1 w-px bg-[#777]" />
          <span className="h-1 w-px bg-[#777]" />
          <span className="h-1 w-px bg-[#777]" />
        </div>
        <svg viewBox="0 0 4 6" className="ml-auto h-1 w-[3px]"><path d="M0 0v6l4-3z" fill="#555" /></svg>
      </div>
    </aside>
  );
}

function SheetDrawing() {
  return (
    <svg viewBox="112 67 200 480" className="absolute top-0 left-0 h-[480px] w-[200px]" fill="none" stroke="#222">
      <path d="M119.500 403l29-1.700 27 18.700-28.500 1.300zM119.500 403l-5 31.500 27 18.500 5.500-31.700M141.500 453l28.500-2 5.500-31" strokeWidth="1.200" />
      <ellipse cx="130.300" cy="428" rx="2.300" ry="3.500" strokeWidth="1.200" />
      <path d="M168 431c-7-7-18-2-18 6 0 5 3 9 7 11" />
      <circle cx="163.500" cy="440" r="9" />
      <path d="M112.500 440c2 6 2 15 0 22" strokeWidth="2" />
      <path d="M175 428.700l88-5.500M114 456.500l149-7.800M112 470.500l130 63" stroke="#555" strokeWidth=".8" />
      <path d="M173 428.700l4-1.500v2.500zM112 456.500l5-1.500v3z" fill="#222" stroke="none" />
      {balloons.map((b) => (
        <g key={b.n}>
          <circle cx={b.x} cy={b.y} r="6" fill="#fff" stroke="#444" />
          <text x={b.x} y={b.y + 3} textAnchor="middle" stroke="none" fill="#222" className="font-['Liberation_Mono',monospace] text-[9px]">
            {b.n}
          </text>
        </g>
      ))}
    </svg>
  );
}

function Sheet() {
  return (
    <main className="mr-0.5 ml-[5px] flex min-w-0 flex-1 flex-col border-r-2 border-b-2 border-l border-[#85858a] bg-[#f1f1f1] pr-0.5 pb-[3px] pl-[3px]">
      <div className="flex h-[18px] items-center gap-[7px] pl-[5px]">
        <button type="button" className="text-[7px] leading-3">Foglio.1</button>
        <span className="h-[14px] w-px bg-[#222]" />
      </div>
      <div className="relative flex-1 overflow-hidden border-t border-l border-[#c9c9c9] bg-white pt-[93px] pl-[200px] font-['Liberation_Mono',monospace] text-[9px] leading-[11px] text-[#1c1c1c]">
        <SheetDrawing />
        {bomTables.map((t) => (
          <section key={t.title} className={t.gap}>
            <h2 className="pl-0.5 leading-3">{t.title}</h2>
            <BomTable label={t.title} head={bomHead} rows={t.rows} cols={bomCols} className={clsx("w-[434px]", t.size)} />
          </section>
        ))}
        <section className="mt-[26px]">
          <div className="pl-0.5 leading-3">
            <h2>Riepilogo di: Product1</h2>
            <p>Parti diverse: 6</p>
            <p>Parti totali: 6</p>
          </div>
          <BomTable label="Riepilogo" head={["Quantità", "Numero parte"]} rows={recapRows} cols={["w-[46px]", "w-[111px]"]} className="h-[88px] w-[158px]" />
        </section>
        <svg className="absolute top-0 left-[814px] h-full w-px" aria-hidden="true">
          <line x1=".5" y1="2" x2=".5" y2="100%" stroke="#c9454e" strokeDasharray="9 3" />
        </svg>
        <div className="absolute top-[180px] bottom-0 left-[966px] w-2 border-t-2 border-l-2 border-[#222]" />
      </div>
    </main>
  );
}

function BottomToolbar() {
  return (
    <div className={clsx("flex h-[22px] items-center", BAR)}>
      {bottomGroups.map((group, i) => (
        <div key={i} className="flex items-center">
          <Divider className={group.gap} />
          {group.tools.map((item) => <Tool key={item.label} item={item} />)}
        </div>
      ))}
      <svg viewBox="0 0 28 22" className="mr-0.5 ml-auto h-[22px] w-7 shrink-0" role="img" aria-label="CATIA">
        <path d="M11 1c5-1 6 1 1 5M14 6c2-3 0-4-2-3" fill="none" stroke="#d8472b" strokeWidth="1.500" />
        <path d="M8 8c8-1 6 6-3 7l3-5" fill="none" stroke="#35378f" strokeWidth="1.600" />
        <path d="M20 6c-6 0-5 3-3 5s-1 4-4 4" fill="none" stroke="#efb03a" strokeWidth="1.600" />
        <text x="5" y="21" fill="#35378f" className="text-[7px] font-bold italic">CATIA</text>
      </svg>
    </div>
  );
}

function StatusBar() {
  return (
    <footer className="flex h-[14px] items-center border-b border-[#a5a4b8] bg-[#d0d0e6] pl-0.5 text-[7px] leading-3 text-[#1d1d2b]">
      <span>Cattura</span>
      <input type="text" aria-label="Comando" className="mr-0.5 ml-auto h-[11px] w-[177px] bg-white px-1" />
      {["Finestra comandi", "Stato"].map((label) => (
        <button key={label} type="button" aria-label={label} className="mr-0.5 flex h-[11px] w-[18px] items-center justify-center border border-[#a9a8bd] bg-[#cbcbdd]">
          <svg viewBox="0 0 10 8" className="h-2 w-[10px]"><path d="M1 1h6v5H1zM3 3h2M8 3v4" fill="none" stroke="#9a99ab" /></svg>
        </button>
      ))}
    </footer>
  );
}

export default function App() {
  return (
    <div className={clsx("relative flex min-h-screen w-full flex-col overflow-hidden bg-[#d1cfe7]", FONT)}>
      <TitleBar />
      <MenuBar />
      <TopToolbar />
      <div className="flex flex-1 bg-[#f1f1f5]">
        <TreePanel />
        <Sheet />
        <div className="flex w-[46px] shrink-0 bg-[linear-gradient(to_right,#e9e9f4_0%,#d3d2ea_20%,#cdcce6_90%,#bcbbd4_100%)]">
          <ToolColumn groups={innerColumn} />
          <ToolColumn groups={outerColumn} />
        </div>
      </div>
      <div className="h-[3px] bg-[#f4f4fa]" />
      <BottomToolbar />
      <StatusBar />
      <CapturePalette />
    </div>
  );
}
